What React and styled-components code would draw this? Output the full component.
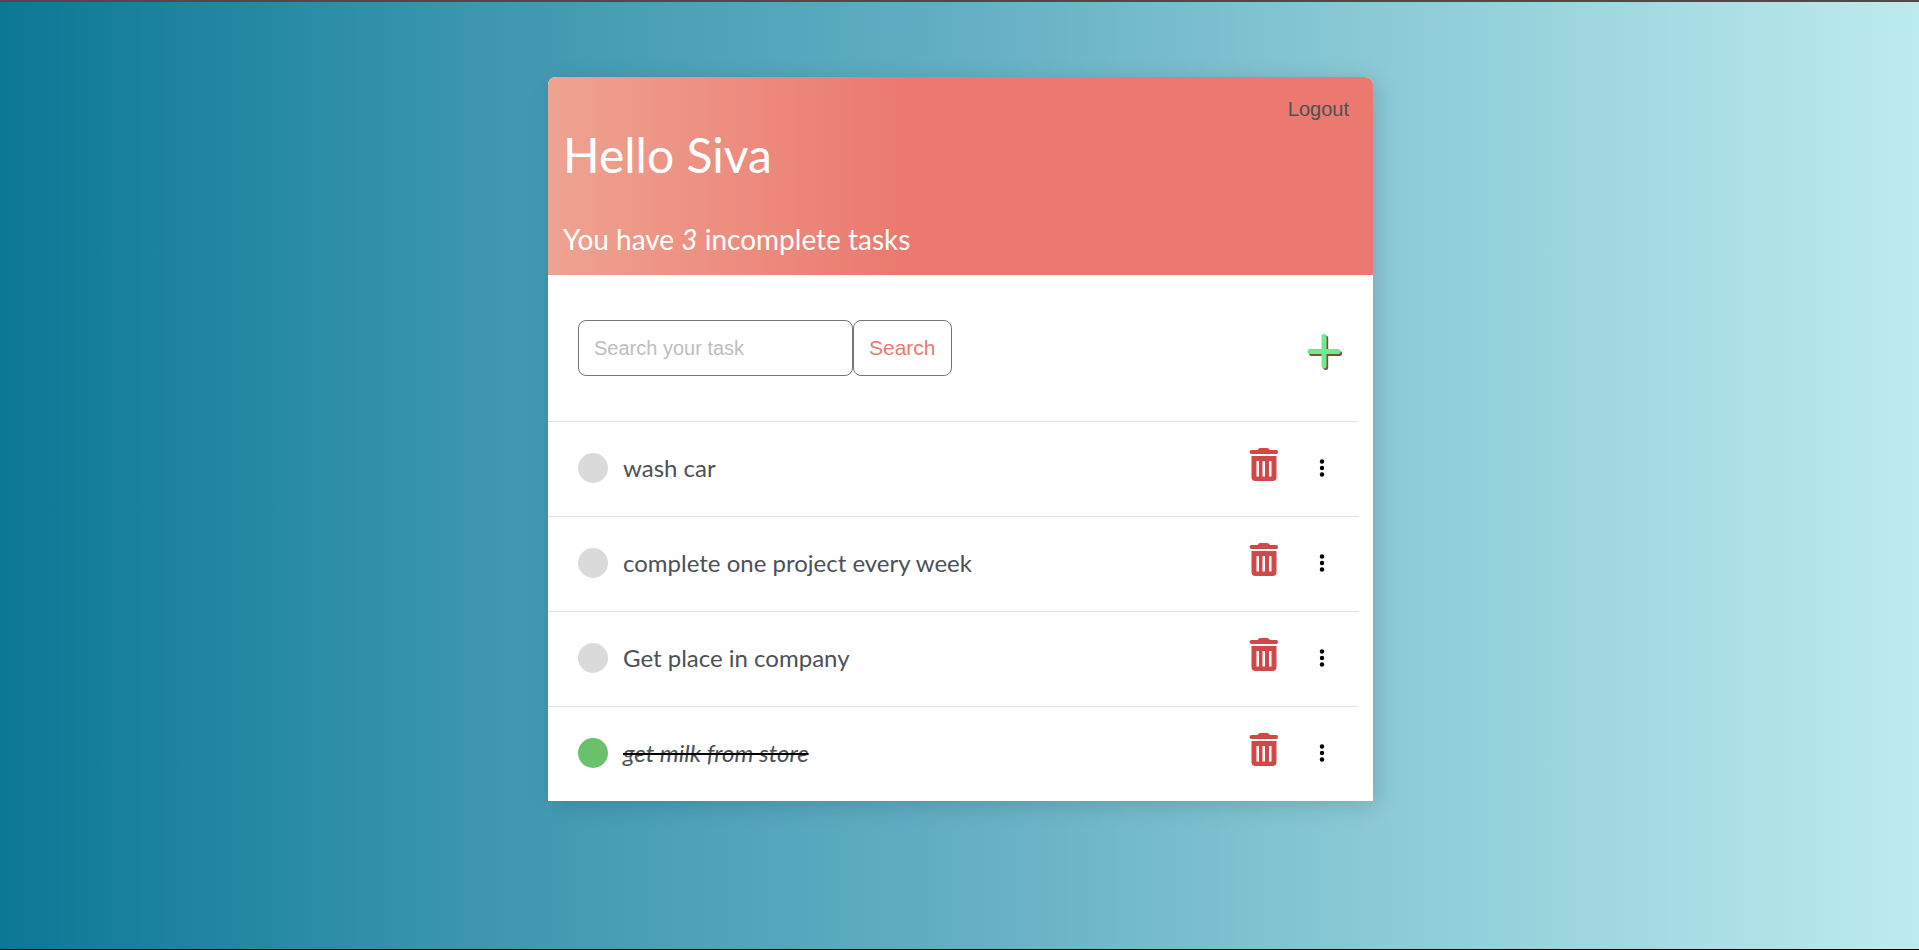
import { useState } from "react";
import styled, { createGlobalStyle } from "styled-components";

const GlobalStyle = createGlobalStyle`
  * { box-sizing: border-box; }
  body {
    margin: 0;
    font-family: Lato, "Open Sans", sans-serif;
    color: #4b5156;
  }
  h1, h3 { margin: 0; font-weight: 400; }
`;

const Page = styled.div`
  min-height: 100vh;
  padding: 75px 22px 75px 24px;
  border-top: 2px solid #5a4448;
  border-bottom: 1px solid #000;
  background: linear-gradient(90deg, #0b7896 0%, #3e98b0 26%, #63afc3 50%, #8bcad6 72%, #bcebee 100%) border-box;
`;

const Card = styled.main`
  width: 100%;
  max-width: 825px;
  margin: 0 auto;
  background: #fff;
  border-radius: 8px 8px 0 0;
  box-shadow: 4px 4px 22px rgba(0, 0, 0, 0.15);
`;

const Header = styled.header`
  display: flex;
  justify-content: space-between;
  align-items: flex-start;
  min-height: 198px;
  padding: 18px 24px 15px 15px;
  border-radius: 8px 8px 0 0;
  color: #fff;
  background: linear-gradient(90deg, #eea390 0%, #eb796f 43%, #eb796f 100%);
`;

const Greeting = styled.div`
  display: flex;
  flex-direction: column;
  gap: 36px;
  padding-top: 30px;
`;

const Title = styled.h1`
  font-size: 48px;
  line-height: 60px;
`;

const Summary = styled.h3`
  font-size: 28px;
  line-height: 36px;
`;

const Logout = styled.a`
  font-family: "Liberation Sans", sans-serif;
  font-size: 20px;
  line-height: 28px;
  color: #4b5156;
  text-decoration: none;
`;

const Toolbar = styled.div`
  display: flex;
  align-items: center;
  justify-content: space-between;
  padding: 45px 30px;
`;

const SearchForm = styled.form`
  display: flex;
`;

const SearchInput = styled.input`
  width: 275px;
  height: 56px;
  padding: 0 15px;
  border: 1px solid #767676;
  border-radius: 8px;
  font: 20px "Liberation Sans", sans-serif;
  &::placeholder { color: #bdbdbd; opacity: 1; }
`;

const SearchButton = styled.button`
  height: 56px;
  padding: 0 15px;
  border: 1px solid #767676;
  border-radius: 8px;
  background: #fff;
  color: #eb796f;
  font: 21px "Liberation Sans", sans-serif;
`;

const AddLink = styled.a`
  display: flex;
  padding-top: 8px;
`;

const List = styled.ul`
  margin: 0 15px 0 0;
  padding: 0;
  list-style: none;
`;

const Row = styled.li`
  display: flex;
  align-items: center;
  height: 95px;
  padding: 0 33px 2px 30px;
  border-top: 1px solid #dee2e6;
`;

const Check = styled.input`
  appearance: none;
  width: 30px;
  height: 30px;
  margin: 0 15px 0 0;
  border-radius: 50%;
  background: #dadada;
  &:checked { background: #6bc06b; }
`;

const TaskLabel = styled.label`
  flex: 1;
  font-size: 24px;
  line-height: 30px;
`;

const TaskText = styled.span`
  font-style: ${({ $done }) => ($done ? "italic" : "normal")};
  text-decoration: ${({ $done }) => ($done ? "line-through 2px #000" : "none")};
`;

const IconButton = styled.button`
  display: flex;
  padding: 0;
  border: 0;
  background: none;
`;

const DeleteButton = styled(IconButton)`
  padding-bottom: 6px;
`;

const Actions = styled.div`
  display: flex;
  align-items: center;
  gap: 40px;
`;

const tasks = [
  { title: "wash car", complete: false },
  { title: "complete one project every week", complete: false },
  { title: "Get place in company", complete: false },
  { title: "get milk from store", complete: true },
];

function PlusIcon() {
  return (
    <svg width="36" height="38" viewBox="0 0 36 38" strokeWidth="5" strokeLinecap="round">
      <path d="M4.500 20.500H32.500M18.700 5V34.500" stroke="#854a40" />
      <path d="M3 18.500H31M17 3.500V33" stroke="#6eeb8e" />
    </svg>
  );
}

function TrashIcon() {
  return (
    <svg width="30" height="34" viewBox="0 0 30 34">
      <path d="M9 1.500Q9.500 0 11 0H18Q20 0 20.500 1.500L21 2H27.500Q29 2.200 29 4Q29 6 27.500 6H2.500Q.5 6 .5 4Q.5 2 2.500 2H8.500Z" fill="#d04848" />
      <path fillRule="evenodd" d="M2.500 8H27.500V29Q27.500 33 23.500 33H6.500Q2.500 33 2.500 29ZM7.500 13V28.500H10V13ZM13.500 13V28.500H16V13ZM20 13V28.500H22.500V13Z" fill="#d04848" />
    </svg>
  );
}

function DotsIcon() {
  return (
    <svg width="6" height="18" viewBox="0 0 6 18">
      <circle cx="3" cy="2.500" r="2.200" />
      <circle cx="3" cy="9" r="2.200" />
      <circle cx="3" cy="15.500" r="2.200" />
    </svg>
  );
}

function Task({ id, title, done, onToggle }) {
  return (
    <Row>
      <Check id={id} type="checkbox" checked={done} onChange={onToggle} />
      <TaskLabel htmlFor={id}>
        <TaskText $done={done}>{title}</TaskText>
      </TaskLabel>
      <Actions>
        <DeleteButton type="button" aria-label={"Delete " + title}><TrashIcon /></DeleteButton>
        <IconButton type="button" aria-label={"Options for " + title}><DotsIcon /></IconButton>
      </Actions>
    </Row>
  );
}

export default function App() {
  const [items, setItems] = useState(tasks);
  const toggle = (index) =>
    setItems(items.map((item, i) => (i === index ? { ...item, complete: !item.complete } : item)));
  const remaining = items.filter((item) => !item.complete).length;

  return (
    <Page>
      <GlobalStyle />
      <Card>
        <Header>
          <Greeting>
            <Title>Hello Siva</Title>
            <Summary>You have <i>{remaining}</i> incomplete tasks</Summary>
          </Greeting>
          <Logout href="#logout">Logout</Logout>
        </Header>
        <Toolbar>
          <SearchForm onSubmit={(event) => event.preventDefault()}>
            <SearchInput type="text" aria-label="Search your task" placeholder="Search your task" />
            <SearchButton type="submit">Search</SearchButton>
          </SearchForm>
          <AddLink href="#add" aria-label="Add task"><PlusIcon /></AddLink>
        </Toolbar>
        <List>
          {items.map((item, i) => (
            <Task key={item.title} id={"task-" + i} title={item.title} done={item.complete} onToggle={() => toggle(i)} />
          ))}
        </List>
      </Card>
    </Page>
  );
}
